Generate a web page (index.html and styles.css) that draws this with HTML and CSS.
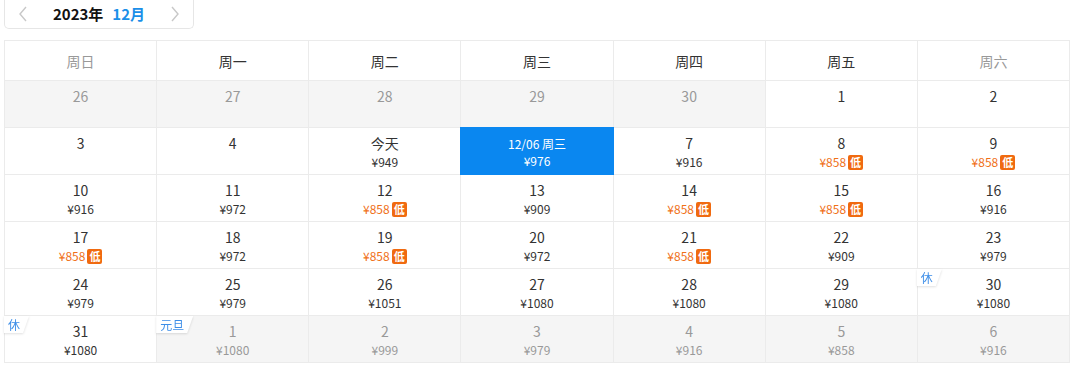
FILE: index.html
```html
<!DOCTYPE html>
<html lang="zh">
<head>
<meta charset="utf-8">
<link rel="stylesheet" href="styles.css">
</head>
<body>
<div class="page">
  <div class="month-bar">
    <span class="arrow"><svg width="10" height="16" viewBox="0 0 10 16"><path d="M8 1 L2 8 L8 15" fill="none" stroke="#c8c8c8" stroke-width="1.4"/></svg></span>
    <span class="title"><span class="year">2023年</span><span class="month">12月</span></span>
    <span class="arrow"><svg width="10" height="16" viewBox="0 0 10 16"><path d="M2 1 L8 8 L2 15" fill="none" stroke="#c8c8c8" stroke-width="1.4"/></svg></span>
  </div>

  <div class="cal">
    <div class="wd weekend">周日</div>
    <div class="wd">周一</div>
    <div class="wd">周二</div>
    <div class="wd">周三</div>
    <div class="wd">周四</div>
    <div class="wd">周五</div>
    <div class="wd weekend">周六</div>

    <div class="cell other"><div class="num">26</div></div>
    <div class="cell other"><div class="num">27</div></div>
    <div class="cell other"><div class="num">28</div></div>
    <div class="cell other"><div class="num">29</div></div>
    <div class="cell other"><div class="num">30</div></div>
    <div class="cell"><div class="num">1</div></div>
    <div class="cell"><div class="num">2</div></div>

    <div class="cell"><div class="num">3</div></div>
    <div class="cell"><div class="num">4</div></div>
    <div class="cell"><div class="num">今天</div><div class="price">¥949</div></div>
    <div class="cell selected"><div class="sel-label">12/06 周三</div><div class="price">¥976</div></div>
    <div class="cell"><div class="num">7</div><div class="price">¥916</div></div>
    <div class="cell"><div class="num">8</div><div class="price low">¥858<span class="low-tag">低</span></div></div>
    <div class="cell"><div class="num">9</div><div class="price low">¥858<span class="low-tag">低</span></div></div>

    <div class="cell"><div class="num">10</div><div class="price">¥916</div></div>
    <div class="cell"><div class="num">11</div><div class="price">¥972</div></div>
    <div class="cell"><div class="num">12</div><div class="price low">¥858<span class="low-tag">低</span></div></div>
    <div class="cell"><div class="num">13</div><div class="price">¥909</div></div>
    <div class="cell"><div class="num">14</div><div class="price low">¥858<span class="low-tag">低</span></div></div>
    <div class="cell"><div class="num">15</div><div class="price low">¥858<span class="low-tag">低</span></div></div>
    <div class="cell"><div class="num">16</div><div class="price">¥916</div></div>

    <div class="cell"><div class="num">17</div><div class="price low">¥858<span class="low-tag">低</span></div></div>
    <div class="cell"><div class="num">18</div><div class="price">¥972</div></div>
    <div class="cell"><div class="num">19</div><div class="price low">¥858<span class="low-tag">低</span></div></div>
    <div class="cell"><div class="num">20</div><div class="price">¥972</div></div>
    <div class="cell"><div class="num">21</div><div class="price low">¥858<span class="low-tag">低</span></div></div>
    <div class="cell"><div class="num">22</div><div class="price">¥909</div></div>
    <div class="cell"><div class="num">23</div><div class="price">¥979</div></div>

    <div class="cell"><div class="num">24</div><div class="price">¥979</div></div>
    <div class="cell"><div class="num">25</div><div class="price">¥979</div></div>
    <div class="cell"><div class="num">26</div><div class="price">¥1051</div></div>
    <div class="cell"><div class="num">27</div><div class="price">¥1080</div></div>
    <div class="cell"><div class="num">28</div><div class="price">¥1080</div></div>
    <div class="cell"><div class="num">29</div><div class="price">¥1080</div></div>
    <div class="cell"><span class="tag-wrap"><span class="tag">休</span></span><div class="num">30</div><div class="price">¥1080</div></div>

    <div class="cell"><span class="tag-wrap"><span class="tag">休</span></span><div class="num">31</div><div class="price">¥1080</div></div>
    <div class="cell other"><span class="tag-wrap"><span class="tag">元旦</span></span><div class="num">1</div><div class="price">¥1080</div></div>
    <div class="cell other"><div class="num">2</div><div class="price">¥999</div></div>
    <div class="cell other"><div class="num">3</div><div class="price">¥979</div></div>
    <div class="cell other"><div class="num">4</div><div class="price">¥916</div></div>
    <div class="cell other"><div class="num">5</div><div class="price">¥858</div></div>
    <div class="cell other"><div class="num">6</div><div class="price">¥916</div></div>
  </div>
</div>
</body>
</html>
```

FILE: styles.css
```css
* { box-sizing: border-box; }
html, body { margin: 0; padding: 0; background: #fff; }
body {
  font-family: "Noto Sans CJK SC", "Noto Sans", sans-serif;
  color: #333;
}
.page {
  padding: 0 10px 0 4px;
}
.month-bar {
  width: 190px;
  height: 29px;
  border: 1px solid #e6e6e6;
  border-top: none;
  border-radius: 0 0 5px 5px;
  display: flex;
  align-items: center;
  justify-content: space-between;
  padding: 0 13px 0 13px;
}
.arrow { display: flex; align-items: center; }
.title { font-size: 15px; font-weight: bold; line-height: 20px; display: flex; gap: 9px; }
.year { color: #111; }
.month { color: #1a8fe8; }

.cal {
  margin-top: 11px;
  display: grid;
  grid-template-columns: repeat(7, 1fr);
  grid-template-rows: 40px repeat(6, 47px);
  border-left: 1px solid #ebebeb;
  border-top: 1px solid #ebebeb;
  width: 1066px;
}
.wd {
  border-right: 1px solid #ebebeb;
  border-bottom: 1px solid #ebebeb;
  display: flex;
  align-items: center;
  justify-content: center;
  font-size: 14px;
  color: #333;
}
.wd.weekend { color: #999; }
.cell {
  position: relative;
  border-right: 1px solid #ebebeb;
  border-bottom: 1px solid #ebebeb;
  display: flex;
  flex-direction: column;
  align-items: center;
  padding-top: 6px;
  background: #fff;
}
.cell.other { background: #f5f5f5; color: #999; }
.cell.other .price { color: #999; }
.num { font-size: 14px; line-height: 19px; }
.price { font-size: 12px; line-height: 16px; margin-top: 1px; color: #333; display: flex; align-items: center; }
.price.low { color: #f07018; }
.low-tag {
  display: inline-block;
  background: #f06a10;
  color: #fff;
  font-size: 11px;
  line-height: 15px;
  width: 15px;
  height: 15px;
  text-align: center;
  border-radius: 2px;
  margin-left: 2px;
  font-weight: bold;
}
.cell.selected {
  background: #0a87f0;
  color: #fff;
  margin: -1px 0 0 -1px;
  border: none;
  padding-top: 8px;
}
.cell.selected .price { color: #fff; }
.sel-label { font-size: 12px; line-height: 17px; }
.tag-wrap {
  position: absolute;
  left: -1px;
  top: 0;
  filter: drop-shadow(0 1px 1px rgba(0,0,0,0.12));
}
.tag {
  display: block;
  background: #fff;
  color: #3d8ee8;
  font-size: 12px;
  line-height: 17px;
  padding: 0 9px 0 4px;
  clip-path: polygon(0 0, 100% 0, calc(100% - 6px) 100%, 0 100%);
}
```
